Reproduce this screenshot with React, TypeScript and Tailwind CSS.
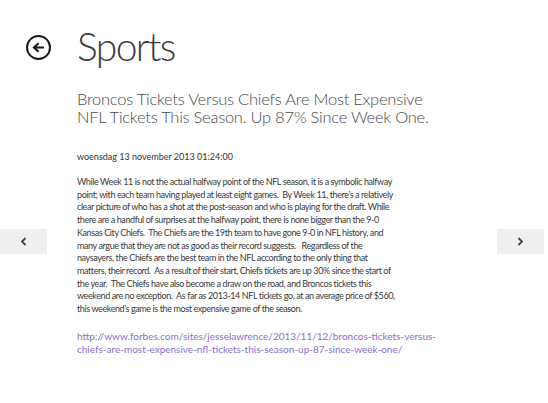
import React from "react";

const bodyLines = [
  "While Week 11 is not the actual halfway point of the NFL season, it is a symbolic halfway",
  "point; with each team having played at least eight games.  By Week 11, there’s a relatively",
  "clear picture of who has a shot at the post-season and who is playing for the draft. While",
  "there are a handful of surprises at the halfway point, there is none bigger than the 9-0",
  "Kansas City Chiefs.  The Chiefs are the 19th team to have gone 9-0 in NFL history, and",
  "many argue that they are not as good as their record suggests.   Regardless of the",
  "naysayers, the Chiefs are the best team in the NFL according to the only thing that",
  "matters, their record.  As a result of their start, Chiefs tickets are up 30% since the start of",
  "the year.  The Chiefs have also become a draw on the road, and Broncos tickets this",
  "weekend are no exception.  As far as 2013-14 NFL tickets go, at an average price of $560,",
  "this weekend’s game is the most expensive game of the season.",
];

function BackButton() {
  return (
    <button className="mt-[13px] flex h-[25px] w-[25px] shrink-0 items-center justify-center rounded-full border-2 border-[#1a1a1a]">
      <svg width="13" height="11" viewBox="0 0 13 11" fill="none">
        <path d="M12 5.5H2.5M6.5 1.2L2 5.5l4.5 4.3" stroke="#1a1a1a" strokeWidth="2.2" />
      </svg>
    </button>
  );
}

function FlipButton({ dir }: { dir: "left" | "right" }) {
  return (
    <button
      className={`absolute top-[229px] flex h-[25px] w-[47px] items-center justify-center bg-[#efefef] ${
        dir === "left" ? "left-0" : "right-[4px]"
      }`}
    >
      <svg width="7" height="9" viewBox="0 0 7 9" fill="none">
        {dir === "left" ? (
          <path d="M5.5 1L2 4.5 5.5 8" stroke="#444" strokeWidth="1.8" />
        ) : (
          <path d="M1.5 1L5 4.5 1.5 8" stroke="#444" strokeWidth="1.8" />
        )}
      </svg>
    </button>
  );
}

export default function App() {
  return (
    <div className="relative h-[403px] w-[548px] overflow-hidden bg-white font-['Lato',sans-serif] text-[#444]">
      {/* Header */}
      <header className="flex items-start gap-[26px] pl-[26px] pt-[22px]">
        <BackButton />
        <h1 className="text-[39px] font-light leading-[48px] tracking-[-1.6px] text-[#3c3c3c]">Sports</h1>
      </header>

      {/* Article */}
      <div className="pl-[77px]">
        <h2 className="mt-[20px] text-[16.5px] font-light leading-[18px] tracking-[-0.25px] text-[#4a4a4a]">
          Broncos Tickets Versus Chiefs Are Most Expensive
          <br />
          NFL Tickets This Season. Up 87% Since Week One.
        </h2>

        <p className="mt-[24px] text-[9px] leading-[13px] text-[#333]">woensdag 13 november 2013 01:24:00</p>

        <p className="mt-[13px] text-[9px] leading-[12.7px] tracking-[-0.4px] text-[#3a3a3a]">
          {bodyLines.map((line, i) => (
            <span key={i} className="block whitespace-pre">
              {line}
            </span>
          ))}
        </p>

        <a className="mt-[14px] block text-[10px] leading-[13.5px] text-[#8b6fd8]" href="#">
          http://www.forbes.com/sites/jesselawrence/2013/11/12/broncos-tickets-versus-
          <br />
          chiefs-are-most-expensive-nfl-tickets-this-season-up-87-since-week-one/
        </a>
      </div>

      <FlipButton dir="left" />
      <FlipButton dir="right" />
    </div>
  );
}
